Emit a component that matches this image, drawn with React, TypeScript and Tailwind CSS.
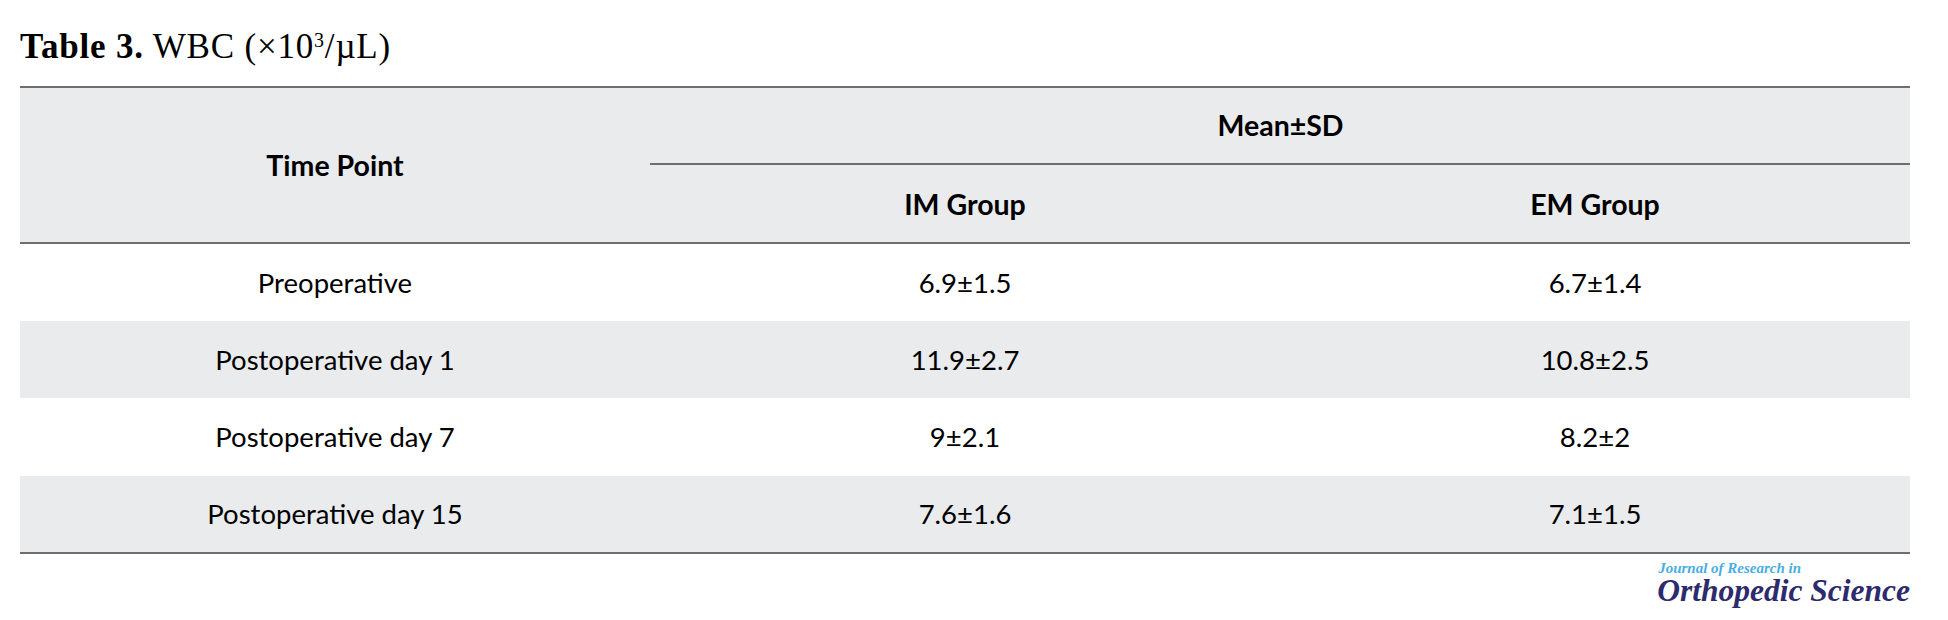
const ROWS: [string, string, string][] = [
  ["Preoperative", "6.9±1.5", "6.7±1.4"],
  ["Postoperative day 1", "11.9±2.7", "10.8±2.5"],
  ["Postoperative day 7", "9±2.1", "8.2±2"],
  ["Postoperative day 15", "7.6±1.6", "7.1±1.5"],
];

const SANS = "font-['Lato','Noto_Sans',sans-serif]";

function Logo() {
  return (
    <div className="flex justify-end pt-[7px]">
      <div className="flex flex-col font-['Liberation_Serif',serif] font-bold italic leading-none">
        <span className="pl-[1px] text-[15px] text-[#48ade2]">Journal of Research in</span>
        <span className="-mt-[1px] text-[31.5px] text-[#2d2b6c]">Orthopedic Science</span>
      </div>
    </div>
  );
}

export default function App() {
  return (
    <div className="h-[620px] w-[1948px] bg-white pl-[20px] pr-[38px] text-black">
      <div className="flex h-[86px] items-start pt-[27px] font-['Liberation_Serif',serif] text-[35px] leading-[40px] tracking-[0.8px]">
        <span className="font-bold">Table 3.</span>
        <span className="ml-[9px]">
          WBC (×10<sup className="-top-[0.55em] text-[20px]">3</sup>/µL)
        </span>
      </div>

      <table className={`w-[1890px] table-fixed border-collapse ${SANS} text-[27.5px]`}>
        <colgroup>
          <col className="w-[630px]" />
          <col className="w-[630px]" />
          <col className="w-[630px]" />
        </colgroup>
        <thead className="bg-[#eaebed] text-[28.5px] font-bold">
          <tr className="border-t-2 border-[#6f6f6f]">
            <th rowSpan={2} className="border-b-2 border-[#6f6f6f] text-center">
              Time Point
            </th>
            <th colSpan={2} className="h-[77px] border-b-2 border-[#6f6f6f] pl-[1px] text-center">
              Mean±SD
            </th>
          </tr>
          <tr>
            <th className="h-[79px] border-b-2 border-[#6f6f6f] pt-[2px] text-center">IM Group</th>
            <th className="h-[79px] border-b-2 border-[#6f6f6f] pt-[2px] text-center">EM Group</th>
          </tr>
        </thead>
        <tbody className="border-b-2 border-[#6f6f6f]">
          {ROWS.map(([label, im, em], i) => (
            <tr key={label} className={i % 2 === 1 ? "bg-[#eaebed]" : "bg-white"}>
              <td className="h-[77.5px] text-center">{label}</td>
              <td className="h-[77.5px] text-center">{im}</td>
              <td className="h-[77.5px] text-center">{em}</td>
            </tr>
          ))}
        </tbody>
      </table>

      <Logo />
    </div>
  );
}
